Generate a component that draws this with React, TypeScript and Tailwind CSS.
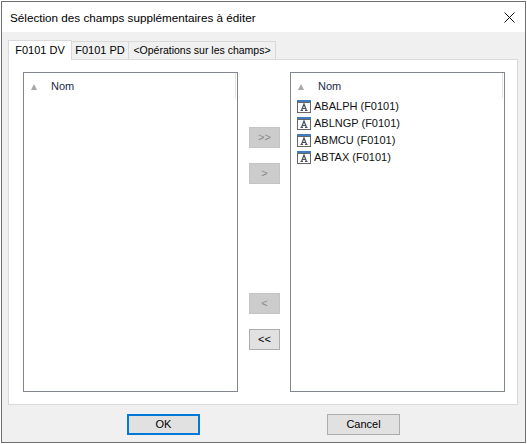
const fields = ["ABALPH (F0101)", "ABLNGP (F0101)", "ABMCU (F0101)", "ABTAX (F0101)"];

function FieldIcon() {
  return (
    <svg width="14" height="13" viewBox="0 0 14 13" className="shrink-0">
      <rect x="0" y="0" width="14" height="3" fill="#3f7cc0" />
      <rect x="0.5" y="2.5" width="13" height="10" fill="#fff" stroke="#666" />
      <path d="M3.5 10.5h2.5M8 10.5h2.5M4.5 10.5 7 4l2.5 6.5M5.5 8.5h3" fill="none" stroke="#46505e" strokeWidth="1.2" />
    </svg>
  );
}

function ListPanel({ items = [] }: { items?: string[] }) {
  return (
    <div className="relative h-[320px] w-[215px] shrink-0 border border-[#82878f] bg-white">
      <div className="flex h-[26px] items-center pl-[7px]">
        <svg width="6" height="6" viewBox="0 0 6 6" className="mt-[1px]">
          <path d="M3 0 6 6H0Z" fill="#a8a8a8" />
        </svg>
        <span className="ml-[14px] text-[#1a2a4a]">Nom</span>
      </div>
      <div className="absolute right-[1px] top-0 h-[25px] w-px bg-[#e5e5e5]" />
      <div className="-mt-px flex flex-col pl-[6px]">
        {items.map((f) => (
          <div key={f} className="flex h-[17px] items-center gap-[3px] text-[#111]">
            <FieldIcon />
            <span>{f}</span>
          </div>
        ))}
      </div>
    </div>
  );
}

function MoveButton({ label, off, className = "" }: { label: string; off?: boolean; className?: string }) {
  return (
    <button
      type="button"
      className={`h-[21px] w-[31px] border ${off ? "border-[#c4c4c4] bg-[#cccccc] text-[#8a8a8a]" : "border-[#adadad] bg-[#e1e1e1] text-black"} ${className}`}
    >
      {label}
    </button>
  );
}

export default function App() {
  return (
    <div className="h-[444px] w-[527px] bg-white p-px text-[11px] leading-[15px] [font-family:'Liberation_Sans',Arial,sans-serif]">
      <div className="flex h-[442px] flex-col border border-[#6f6f6f] bg-[#f0f0f0]">
        <div className="flex h-[30px] shrink-0 items-center justify-between bg-white pl-[8px] pr-[10px] text-black">
          <span className="text-[11.7px]">Sélection des champs supplémentaires à éditer</span>
          <svg width="11" height="11" viewBox="0 0 11 11">
            <path d="M.5.5l10 10M10.5.5l-10 10" fill="none" stroke="#111" strokeWidth="1" />
          </svg>
        </div>
        <div className="pl-[6px] pr-[7px] pt-[8px]">
          <div className="flex h-[19px] items-end">
            <div className="z-10 -mb-px flex h-[20px] w-[64px] items-center justify-center border border-b-0 border-[#d9d9d9] bg-white">F0101 DV</div>
            <div className="flex h-[18px] w-[57px] items-center justify-center border border-l-0 border-b-0 border-[#d9d9d9] bg-[#f0f0f0]">F0101 PD</div>
            <div className="flex h-[18px] w-[147px] items-center justify-center border border-l-0 border-b-0 border-[#d9d9d9] bg-[#f0f0f0] text-[10.5px]">&lt;Opérations sur les champs&gt;</div>
          </div>
          <div className="flex h-[346px] items-start border border-[#d9d9d9] bg-white pl-[14px] pt-[12px]">
            <ListPanel />
            <div className="flex w-[52px] shrink-0 flex-col items-start pl-[11px] pt-[55px]">
              <MoveButton label=">>" off />
              <MoveButton label=">" off className="mt-[15px]" />
              <MoveButton label="<" off className="mt-[109px]" />
              <MoveButton label="<<" className="mt-[15px]" />
            </div>
            <ListPanel items={fields} />
          </div>
        </div>
        <div className="flex justify-between pl-[125px] pr-[125px] pt-[9px]">
          <button type="button" className="h-[21px] w-[73px] border-2 border-[#0078d7] bg-[#e1e1e1]">OK</button>
          <button type="button" className="h-[21px] w-[73px] border border-[#adadad] bg-[#e1e1e1]">Cancel</button>
        </div>
      </div>
    </div>
  );
}
